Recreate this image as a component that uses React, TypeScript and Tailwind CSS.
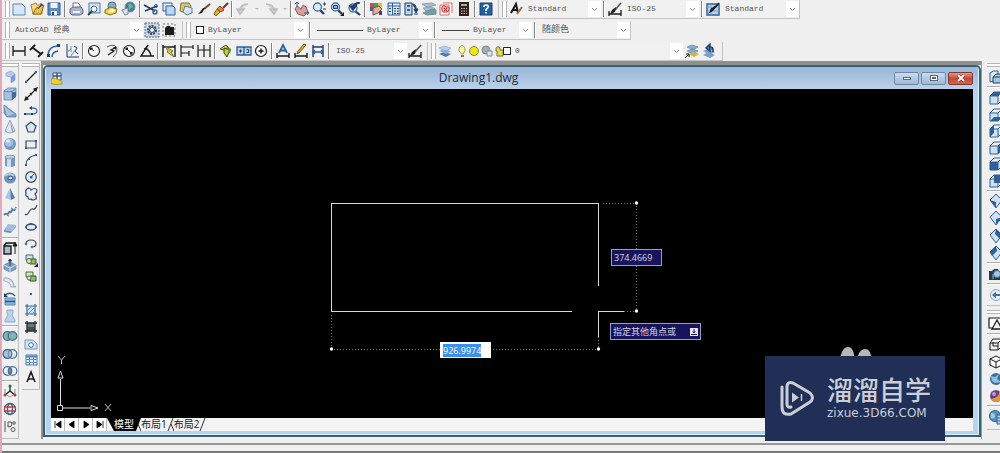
import { useEffect, useRef, type ReactNode } from "react";

const NAVY = "#1f3f66";
const BLUE = "#2f6198";
const MID = "#6f9ccb";
const PALE = "#cfe0f3";
const INK = "#1b1b1b";
const GOLD = "#e3b21c";

const dimEnds = <path d="M2 3v10M14 3v10M2 8h12" stroke={INK} strokeWidth="1.300" />;
const lens = (
  <>
    <path d="M9 9l4 4" stroke={NAVY} strokeWidth="2.4" />
    <circle cx="6.5" cy="6" r="4" fill="#d9ecfa" stroke="#486f96" strokeWidth="1.3" />
  </>
);
const cubeEdges = <path d="M2 6h8v8H2zM2 6l4-4h8l-4 4M14 2v8l-4 4" stroke={BLUE} fill="none" />;
const gem = <path d="M8 1l6 6-6 8-6-8z" fill={PALE} stroke={BLUE} />;
const rings = (
  <>
    <circle cx="5.5" cy="8" r="4.3" />
    <circle cx="10.5" cy="8" r="4.3" />
  </>
);

const icons: Record<string, ReactNode> = {
  new: <path d="M2 3h9l3 3v8H2z" fill="#d7e7f7" stroke="#5d87b0" />,
  open: (
    <>
      <path d="M2 4l5-2 1 2h5v9H4z" fill="#f4dc8b" stroke="#a88428" />
      <path d="M4 13l3-6 8-3-3 9z" fill="#e9c14a" stroke="#8d6d1e" />
      <path d="M9 8l4-5M11 3h2v2" stroke={NAVY} />
    </>
  ),
  save: (
    <>
      <path d="M2 2h12v12H2z" fill="#5c8dc2" stroke="#2f5a8a" />
      <path d="M4.5 2h7v5h-7zM5 10h6v4H5z" fill="#eef4fa" />
      <path d="M6 11h2v3H6z" fill={NAVY} />
    </>
  ),
  print: (
    <>
      <path d="M5 7V2h5l2 2v3" fill="#fff" stroke="#6b7893" />
      <path d="M2 8l3-2h8l2 3v3l-3 2H4l-2-2z" fill="#a9b5cb" stroke="#5b6888" />
      <path d="M5 11h7" stroke="#fff" strokeWidth="1.5" />
    </>
  ),
  preview: (
    <>
      <path d="M3 2h11v10H3z" fill="#d5e4f4" stroke="#56779f" />
      <circle cx="8" cy="8" r="3" fill="#edf6fd" stroke="#4a6c93" />
      <path d="M6 10l-4 4" stroke={NAVY} strokeWidth="2" />
    </>
  ),
  publish: (
    <>
      <circle cx="9" cy="5" r="4" fill="#86add5" stroke="#47709b" />
      <path d="M2 9l6-3 6 2-1 4-6 2-5-2z" fill="#f0d13e" stroke="#866e1d" />
      <path d="M5 10l4-2 3 1-3 3z" fill="#fff" />
    </>
  ),
  dwf: (
    <>
      <circle cx="9" cy="6" r="5" fill="#3d77ab" stroke="#6996c0" />
      <path d="M7 3q4-1 5 3l-4 3z" fill="#76b480" />
      <path d="M1 9l6-2v6l-3 1z" fill="#e1e5ec" stroke="#7b8798" />
    </>
  ),
  cut: (
    <>
      <path d="M1 4l11 6M2 10l12-5" stroke={NAVY} strokeWidth="1.5" />
      <circle cx="12" cy="11" r="2" stroke={BLUE} fill="none" strokeWidth="1.4" />
      <circle cx="13" cy="5" r="1.5" stroke={BLUE} fill="none" />
    </>
  ),
  copy: (
    <>
      <path d="M2 2h9v8H2z" fill="#e4effa" stroke={BLUE} />
      <path d="M5 5h7l2 2v7H5z" fill="#bed5ee" stroke={BLUE} />
    </>
  ),
  paste: (
    <>
      <path d="M3 2h8l2 3-3 8-8-3z" fill="#d9c472" stroke="#82733c" />
      <path d="M7 5l7 2v5l-5 2-4-3z" fill="#d9e8f6" stroke="#587da6" />
    </>
  ),
  brush: (
    <>
      <path d="M14 3L8 8" stroke="#8a4a2c" strokeWidth="2.2" />
      <path d="M9 7l-3 5-4 1 2-2 3-4z" fill={INK} />
    </>
  ),
  match: (
    <>
      <path d="M15 2l-5 5" stroke="#8a2c2c" strokeWidth="2.2" />
      <path d="M7 5l4 4-3 2-4-3z" fill="#e5883a" stroke="#7d491d" />
      <path d="M4 8l3 3-4 4-2-2z" fill={GOLD} stroke="#80641c" />
    </>
  ),
  undo: <path d="M13 3Q5 3 5 10M2 8l3 5 4-5z" fill="#bdbdbd" fillOpacity=".5" stroke="#bdbdbd" strokeWidth="1.6" />,
  redo: <path d="M3 3q8 0 8 7M7 8l4 5 3-5z" fill="#bdbdbd" fillOpacity=".5" stroke="#bdbdbd" strokeWidth="1.6" />,
  pan: (
    <>
      <path d="M3 5l4 3 2-4 3 2 2 5-4 4-6-2-3-5z" fill="#d5a19a" stroke="#8a5a62" />
      <path d="M3 1v5M1 3l2-2 2 2M10 12h5M13 10l2 2-2 2" stroke={BLUE} />
    </>
  ),
  zoomRt: <>{lens}<path d="M12 3h3M13.500 1.500v3M12 8h3" stroke={NAVY} /></>,
  zoomWin: <>{lens}<path d="M4.500 4.500h4v3h-4z" fill="#8fb5db" stroke={NAVY} /><path d="M15 11v4h-4z" fill={INK} /></>,
  zoomPrev: (
    <>
      <path d="M9 10l5 4" stroke={NAVY} strokeWidth="2.2" />
      <circle cx="7" cy="7" r="4" fill="#d9ecfa" stroke="#486f96" strokeWidth="1.3" />
      <path d="M14 2Q9 1 7 6M4 5l3 4 3-4z" stroke={NAVY} strokeWidth="1.5" fill={NAVY} />
    </>
  ),
  props: (
    <>
      <path d="M2 2h4v4H2z" fill="#cf4f49" />
      <path d="M6 2h4v4H6z" fill="#49a14b" />
      <path d="M10 2h4v4h-4z" fill="#d8c53c" />
      <path d="M2 6h4v4H2z" fill="#405fba" />
      <path d="M5 7l6-2 3 3-4 4-5 2z" fill="#e2b094" stroke="#744b61" />
      <path d="M11 10h3v4h-3z" fill="#493a83" />
    </>
  ),
  center: (
    <>
      <path d="M2 2h12v12H2z" fill="#dceaf6" stroke={BLUE} />
      <path d="M6.500 2v12M2 5h12" stroke={BLUE} />
      <path d="M8 7.500h2M11 7.500h2M8 10h2M11 10h2M8 12.500h2M11 12.500h2M3 7.500h2M3 10.500h2" stroke={NAVY} strokeWidth="1.2" />
    </>
  ),
  palettes: (
    <>
      <path d="M2 2h7v12H2z" fill="#bed2e8" stroke={NAVY} />
      <path d="M4 4h3v2H4zM4 8h3v2H4z" fill={BLUE} />
      <path d="M9 3q5 0 4 6M11 8l2 4 2-4zM11 13h4" stroke={NAVY} fill={NAVY} />
    </>
  ),
  sheets: (
    <>
      <path d="M1 3l10-1 4 2-9 2zM2 7l9-1 3 2-9 2z" fill="#a9bed1" stroke="#8aa2ba" />
      <path d="M2 12l9-4 4 1v4l-9 1z" fill="#7c9f9a" stroke="#6a8793" />
    </>
  ),
  markup: (
    <>
      <path d="M2 4h9v10H2zM5 2h9v10" fill="#fff" stroke="#d36a6a" />
      <path d="M4 6q2-3 4 0 4-1 3 3-1 3-4 2-4 1-3-5z" fill="#f2baba" stroke="#c83232" />
      <path d="M6 7l3 3M9 7l-3 3" stroke="#b02020" />
    </>
  ),
  calc: (
    <>
      <path d="M3 1h10v14H3z" fill="#30231f" />
      <path d="M5 3h6v2H5z" fill="#a0b49a" />
      <path d="M5 7.500h6M5 10h6M5 12.500h6" stroke="#c8b7aa" strokeDasharray="1.500 1" />
    </>
  ),
  help: (
    <>
      <path d="M2 2h12v12H2z" fill="#25619b" stroke="#153f70" />
      <path d="M6 6q0-2 2-2 3 0 2 2.500L8 8.500V10M8 11v1.500" stroke="#fff" strokeWidth="1.600" fill="none" />
    </>
  ),
  textStyle: (
    <>
      <path d="M3 12L8 3l2 9M5 9h5" stroke={INK} strokeWidth="2" fill="none" />
      <path d="M14 6l-5 7" stroke="#9a7148" strokeWidth="2" />
    </>
  ),
  dimStyle: (
    <>
      <path d="M14 2l-6 7" stroke="#555" strokeWidth="1.600" />
      <path d="M9 6l-1 5-5 2 2-4z" fill={INK} />
      <path d="M2 10v5M14 9v6M2 13h12" stroke={INK} strokeWidth="1.300" />
    </>
  ),
  tableStyle: (
    <>
      <path d="M2 3h12v11H2z" fill="#b9d2ed" stroke={BLUE} strokeWidth="1.500" />
      <path d="M2 6h12M6 6v8M2 10h12" stroke="#7fa5cd" />
      <path d="M14 2l-6 7-3 2 2-4" fill={INK} stroke={INK} strokeWidth="1.300" />
    </>
  ),
  gear: (
    <>
      <path d="M1 1h14v14H1z" fill="#c4d7ea" stroke="#5e6c7d" strokeDasharray="2 1" />
      <circle cx="8" cy="8" r="4" fill="none" stroke="#34475e" strokeWidth="2" strokeDasharray="2 1" />
      <circle cx="8" cy="8" r="2.500" fill="#e9f0f7" stroke="#34475e" />
    </>
  ),
  workspace: (
    <>
      <path d="M2 2h12v12H2z" fill="none" stroke="#777" strokeDasharray="2 2" />
      <path d="M4 6q3-4 6-1h3v8H4z" fill={INK} />
    </>
  ),
  dimLinear: dimEnds,
  dimAligned: <path d="M1 7l5-5M9 14l5-5M4 5l8 6" stroke={INK} strokeWidth="1.800" />,
  dimArc: (
    <>
      <path d="M2 13Q2 3 13 3M6 14q0-5 6-6" stroke={BLUE} fill="none" strokeWidth="1.400" />
      <path d="M11 1h3v3h-3zM1 11h3v3H1z" fill={NAVY} />
    </>
  ),
  dimOrd: (
    <>
      <path d="M3 1v13h12M10 3l3 2-2 3 3 3" stroke={NAVY} fill="none" />
      <path d="M2 10l5-4M7 13l4-6M7 3v6" stroke="#6d8fb2" />
    </>
  ),
  radius: (
    <>
      <circle cx="8" cy="8" r="5.500" fill="#f7f7f7" stroke={INK} strokeWidth="1.100" />
      <path d="M8 8L4.500 5M4.500 7V5h2z" stroke={INK} fill={INK} />
    </>
  ),
  jogged: (
    <>
      <path d="M3 4q7-4 10 1 1 5-4 9" fill="none" stroke="#555" />
      <path d="M11 5L7 7l3 1-6 4" stroke={INK} fill="none" strokeWidth="1.300" />
      <path d="M9 4h3v3z" fill={INK} />
    </>
  ),
  diameter: (
    <>
      <circle cx="8" cy="8" r="5.500" fill="#f7f7f7" stroke={INK} strokeWidth="1.100" />
      <path d="M5 5l6 6M5 7V5h2zM11 9v2H9z" stroke={INK} fill={INK} />
    </>
  ),
  angular: <path d="M9 2L2 13h13M6 5q5 2 6 8M5 6l3-1" stroke={INK} fill="none" strokeWidth="1.400" />,
  quickDim: (
    <>
      <path d="M2 2v12M14 2v12M2 4h12" stroke={INK} strokeWidth="1.400" />
      <path d="M4 3l8 5-2 1 3 5-7-5 1-1z" fill="#d9c638" stroke="#5c632a" strokeWidth=".8" />
    </>
  ),
  baseline: <path d="M2 2v12M2 4h12M2 10h8M14 2v4M10 8v5" stroke={INK} strokeWidth="1.200" fill="none" />,
  continueDim: <path d="M2 2v12M8 2v12M14 2v12M2 7h12" stroke={INK} strokeWidth="1.200" />,
  inspection: (
    <>
      <path d="M2 6l6-4 3 3-5 2z" fill="#e2d338" stroke="#4c5c2a" />
      <path d="M6 5l6 2-3 7-3-4z" fill="#c9c93a" stroke="#33461b" />
      <path d="M8 3l5 3-1 5z" fill="#4f8a35" />
    </>
  ),
  tolerance: (
    <>
      <path d="M1 4h14v8H1z" fill="#b6cee8" stroke={BLUE} strokeWidth="1.300" />
      <path d="M8 4v8M3 8h3M4.500 6.500v3M10.500 6.500h2v3h-2" stroke={NAVY} fill="none" />
    </>
  ),
  centerMark: (
    <>
      <circle cx="8" cy="8" r="5.500" fill="#fafafa" stroke={INK} strokeWidth="1.200" />
      <path d="M8 5.500v5M5.500 8h5" stroke={INK} strokeWidth="1.500" />
    </>
  ),
  dimText: (
    <>
      <path d="M4 10l4-8 4 8M5.500 7.500h5" stroke={BLUE} strokeWidth="1.800" fill="none" />
      <path d="M2 10v5M14 10v5M2 13h12" stroke={INK} strokeWidth="1.400" />
    </>
  ),
  dimEdit: (
    <>
      <path d="M13 2L6 10l-2 1 1-3 6-7z" fill={GOLD} stroke="#7c4b1d" />
      <path d="M2 10v5M14 10v5M2 13h12" stroke={INK} strokeWidth="1.400" />
    </>
  ),
  dimUpdate: (
    <>
      <path d="M3 2v12M13 2v12M3 4h10" stroke={NAVY} strokeWidth="1.400" />
      <path d="M3 9h10M5 7L3 9l2 2M11 7l2 2-2 2" stroke={BLUE} fill="none" strokeWidth="1.300" />
    </>
  ),
  layers: (
    <>
      <path d="M2 11l5-2 7 2-5 3z" fill="#4d7aa9" />
      <path d="M2 8l5-2 7 2-5 3z" fill="#8cb2d8" />
      <path d="M2 5l5-2 7 2-5 3z" fill="#b8d1e9" stroke="#7ea1c3" strokeWidth=".6" />
    </>
  ),
  layerCurrent: (
    <>
      <path d="M3 4l5-2 6 2-5 3zM3 8l5-2 6 2-5 3z" fill="#86acd0" stroke="#567ba1" strokeWidth=".6" />
      <path d="M5 11l5-2 5 2-5 3z" fill="#c8b83e" />
      <path d="M1 15l4-4M2 11h3v3" stroke={INK} fill="none" />
    </>
  ),
  layerPrev: (
    <>
      <path d="M2 12l5-3 7 3-5 3zM2 8l5-2 7 3-5 3z" fill="#7ba0c8" />
      <path d="M12 9Q13 3 8 4M9 1L5 5l4 3z" stroke={NAVY} fill="#4f7eae" strokeWidth="1.400" />
    </>
  ),
  polysolid: (
    <>
      <path d="M4 4l5-2 4 3v6l-4 3V8L4 7z" fill="#b4c9ee" stroke="#93a8d8" strokeWidth=".8" />
      <path d="M9 8l4-3v6l-4 3z" fill="#7f97d2" />
    </>
  ),
  box: (
    <>
      <path d="M2 5l4-3h8v8l-4 4H2z" fill="#a7c2e0" stroke="#6485a9" strokeWidth=".8" />
      <path d="M10 6h4v5l-4 3z" fill="#426a96" />
      <path d="M2 5.500h8V14M10 5.500l4-3" stroke="#5f81a7" strokeWidth=".8" fill="none" />
    </>
  ),
  wedge: (
    <>
      <path d="M2 2l12 9v3H5L2 10z" fill="#7ba0c8" stroke="#6084ab" strokeWidth=".8" />
      <path d="M2 3l10 8-7 2z" fill="#a9c4df" />
    </>
  ),
  cone: (
    <>
      <path d="M8 1L3 12q5 4 10 0z" fill="#dde6f0" stroke="#8394a8" strokeWidth=".8" />
      <path d="M8 2l2 11h2z" fill="#8fa8c3" />
    </>
  ),
  sphere: (
    <>
      <circle cx="8" cy="8" r="6" fill="#7499c1" />
      <circle cx="7" cy="6.500" r="4" fill="#a7c3df" />
      <circle cx="6" cy="5" r="1.800" fill="#e0ecf6" />
    </>
  ),
  cylinder: (
    <>
      <path d="M3 4v9q5 2 10 0V4z" fill="#7397bd" />
      <path d="M5 5h4v9H5z" fill="#cfdfee" />
      <ellipse cx="8" cy="4" rx="5" ry="1.800" fill="#b6cce3" stroke="#7594b5" strokeWidth=".8" />
    </>
  ),
  torus: (
    <>
      <ellipse cx="8" cy="8" rx="6" ry="5.500" fill="#6e94be" />
      <path d="M3 6q4-4 9 0" stroke="#b5cde4" strokeWidth="2" fill="none" />
      <ellipse cx="8.500" cy="8" rx="2.500" ry="1.700" fill="#d8e4f0" stroke="#2c527d" />
    </>
  ),
  pyramid: (
    <>
      <path d="M8 2L3 12l6 2z" fill="#a8c5e4" />
      <path d="M8 2l5 10-4 2z" fill="#4d7bae" />
    </>
  ),
  helix: (
    <path d="M2 12l2-2 2 2 1-4 2 2 1-4 2 2 2-4" stroke="#5179a5" strokeWidth="1.800" strokeDasharray="2.500 .8" fill="none" />
  ),
  planar: (
    <>
      <path d="M6 4l8 1-4 6-8-1z" fill="#a2bddb" />
      <path d="M2 10l8 1-1 2-7-1z" fill="#6c91ba" />
      <path d="M10 11l4-6v2l-5 6z" fill="#7fa1c6" />
    </>
  ),
  extrude: (
    <>
      <path d="M2 6h7v8H2zM2 6l2-3h8" fill="#a9bccf" stroke={INK} strokeWidth="1.400" />
      <path d="M13 14V4M11 6l2-4 2 4z" stroke={INK} fill={INK} />
    </>
  ),
  presspull: (
    <>
      <path d="M2 8l6-3 6 3v4l-6 3-6-3z" fill="#7e9fc2" stroke="#5f80a5" strokeWidth=".8" />
      <path d="M8 9V3M6.500 4L8 2l1.500 2z" stroke={NAVY} fill={NAVY} />
      <path d="M2 8l6 3 6-3M8 11v4" stroke="#d4e2f0" fill="none" />
    </>
  ),
  sweep: <path d="M2 4q9-1 10 9l2-1M2 7q6 0 7 6h5M2 4v3" stroke="#9fb3cc" strokeWidth="1.200" fill="#dce5ef" />,
  revolve: (
    <>
      <path d="M3 7h10v7H3z" fill="#8db3da" stroke="#5e89b6" />
      <path d="M3 4q6-4 10 1M3 10.500h10" stroke="#285a8e" fill="none" strokeWidth="1.400" />
      <path d="M2 2v4h4z" fill={NAVY} />
    </>
  ),
  loft: <path d="M5 2h6v3l-1 2 3 5v2H3v-2l3-5-1-2z" fill="#bdd1ec" stroke="#8eabcf" />,
  union: <g fill="#86b2b0" stroke="#3f6d99" strokeWidth="1.300">{rings}</g>,
  subtract: (
    <g fill="#e4ecf4" stroke="#476f9a" strokeWidth="1.200">
      {rings}
      <circle cx="5.500" cy="8" r="4.300" fill="#86abc5" fillOpacity=".6" />
    </g>
  ),
  intersect: (
    <g fill="none" stroke="#476f9a" strokeWidth="1.200">
      {rings}
      <path d="M8 5q3 3 0 6-3-3 0-6z" fill="#6d9dbd" />
    </g>
  ),
  move3d: (
    <>
      <path d="M8 3v5M8 8l-5 4M8 8l5 4" stroke={INK} strokeWidth="1.200" />
      <path d="M3 6v5l5 3 5-3V6" stroke="#7aa393" fill="none" />
      <circle cx="8" cy="3" r="1.500" fill="#2d6a4a" />
      <circle cx="3" cy="12" r="1.500" fill="#b93838" />
      <circle cx="13" cy="12" r="1.500" fill="#b93838" />
    </>
  ),
  rotate3d: (
    <g fill="none" strokeWidth="1.300">
      <circle cx="8" cy="8" r="5.500" stroke="#3a6b54" />
      <ellipse cx="8" cy="8" rx="2.500" ry="5.500" stroke="#385fa2" />
      <path d="M2 6h12M2 10h12" stroke="#c63b47" />
    </g>
  ),
  align3d: (
    <g fill="none" stroke="#555">
      <path d="M3 3v11M6 4q4-1 4 2t-4 3V4" />
      <circle cx="12" cy="5" r="1.300" />
      <circle cx="11" cy="11.500" r="2" />
    </g>
  ),
  line: (
    <>
      <path d="M3 13L13 3" stroke={INK} strokeWidth="1.200" />
      <path d="M2 12h2v2H2zM12 2h2v2h-2z" fill={BLUE} />
    </>
  ),
  xline: <path d="M3 13L13 3M11 3l3-1-1 3zM2 14l1-3 2 2zM7 7l2 2" stroke={INK} fill={INK} strokeWidth="1.200" />,
  polyline: (
    <>
      <path d="M2 12h7q5 0 5-3t-5-3" stroke="#4174a8" strokeWidth="1.300" fill="none" />
      <path d="M1 11h2v2H1zM8 11h2v2H8zM9 4v4L6 6z" fill={NAVY} />
    </>
  ),
  polygon: <path d="M8 3l5 4-2 6H5L3 7z" fill="#d9e5f0" stroke="#39495d" strokeWidth="1.200" />,
  rectangle: (
    <>
      <path d="M3 5h10v7H3z" fill="#e8eff7" stroke="#39495d" strokeWidth="1.200" />
      <path d="M2 11h2v2H2zM12 4h2v2h-2z" fill={BLUE} />
    </>
  ),
  arc: (
    <>
      <path d="M3 13Q3 5 13 3" stroke="#39495d" fill="none" strokeWidth="1.200" />
      <path d="M2 12h2v2H2zM5 6h2v2H5zM12 2h2v2h-2z" fill={BLUE} />
    </>
  ),
  circle: (
    <>
      <circle cx="8" cy="8" r="5.300" fill="#e0eaf3" stroke="#39495d" strokeWidth="1.200" />
      <path d="M8 8l3.500-3.500" stroke={BLUE} />
      <path d="M7 7h2.500v2.500H7z" fill={BLUE} />
    </>
  ),
  revcloud: (
    <path d="M4 3q3-2 4 1 4-3 6 0 0 3-2 4 2 3 1 5-3 2-5 0-3 1-3-2-3-1-2-4-1-3 1-4z" fill="#e7edf4" stroke="#39495d" strokeWidth="1.200" />
  ),
  spline: <path d="M2 12q2 2 4-2t4-3 4-4" stroke="#39495d" fill="none" strokeWidth="1.200" />,
  ellipse: (
    <>
      <ellipse cx="8" cy="8" rx="5" ry="3" fill="#dce8f3" stroke="#39495d" strokeWidth="1.300" />
      <path d="M2 7h2v2H2zM12 7h2v2h-2zM7 4h2v2H7z" fill={BLUE} />
    </>
  ),
  ellipseArc: (
    <>
      <path d="M3 8q0-4 5-4t5 4q0 3-4 3" fill="none" stroke="#39495d" strokeWidth="1.200" />
      <path d="M2 7h2v2H2zM8 10h2v2H8z" fill={BLUE} stroke={MID} strokeWidth=".5" />
    </>
  ),
  insert: (
    <>
      <path d="M3 3h7v5H3z" fill="#cfe0ef" stroke="#45698e" />
      <path d="M7 7h6v5H7z" fill="#8cbc5c" stroke="#3f5c35" />
      <circle cx="6" cy="9" r="2.500" fill="#d7e6a8" stroke="#4e6b3c" />
      <path d="M15 11v4h-4z" fill={INK} />
    </>
  ),
  block: (
    <>
      <path d="M3 3h7v5H3z" fill="#d4e4b6" stroke="#4f6949" />
      <path d="M7 7h6v5H7z" fill="#8fbf65" stroke="#38533a" />
      <circle cx="6" cy="9" r="2" fill="#e6eec9" stroke="#4f6949" />
    </>
  ),
  point: <path d="M7 7h2v2H7z" fill={BLUE} />,
  hatch: (
    <>
      <path d="M4 4h8v8H4z" fill="#cde1f4" />
      <path d="M4 2v12M12 2v12M2 4h12M2 12h12" stroke="#3f6a97" strokeWidth="1.200" />
      <path d="M4 9l5-5M5 12l7-7M9 12l3-3" stroke="#719bc5" />
    </>
  ),
  gradient: (
    <>
      <path d="M4 4h8v8H4z" fill="#6c7775" />
      <path d="M4 8h8v4H4z" fill="#46504f" />
      <path d="M4 2v12M12 2v12M2 4h12M2 12h12" stroke="#263033" strokeWidth="1.300" />
    </>
  ),
  region: (
    <>
      <path d="M2 4h8l4 4v5H2z" fill="#d2e2f2" stroke="#7494b6" />
      <circle cx="8" cy="9" r="2.300" fill="#fff" stroke="#426d98" />
    </>
  ),
  table: (
    <>
      <path d="M3 3h11v10H3z" fill="#e2edf8" stroke="#4778ae" />
      <path d="M3 4.500h11" stroke="#5486bf" strokeWidth="2" />
      <path d="M6.500 4v9M10.500 4v9M3 7.500h11M3 10.500h11" stroke="#5d8fc4" />
    </>
  ),
  mtext: <path d="M4 13L8 3l4 10M5.500 10h5" stroke={INK} strokeWidth="1.600" fill="none" />,
  namedViews: (
    <>
      <path d="M2 4q3-3 8-2v8l-8 3z" fill="#dce9f5" stroke={BLUE} />
      <path d="M5 8h8v6H5zM5 8l3-3h7v6l-2 3" fill="#a5c5e2" stroke={NAVY} />
    </>
  ),
  viewTop: <><path d="M2 6h8v8H2z" fill={PALE} /><path d="M2 6l4-4h8l-4 4z" fill={BLUE} />{cubeEdges}</>,
  viewBottom: <><path d="M2 6h8v5H2z" fill={PALE} /><path d="M2 14l4-4h8l-4 4z" fill={BLUE} />{cubeEdges}</>,
  viewLeft: <><path d="M6 6h5v7H6z" fill={PALE} /><path d="M2 6l4-4v8l-4 4z" fill={BLUE} />{cubeEdges}</>,
  viewRight: <><path d="M2 6h8v8H2z" fill={PALE} /><path d="M10 6l4-4v8l-4 4z" fill={BLUE} />{cubeEdges}</>,
  viewFront: <><path d="M10 6l4-4v8l-4 4z" fill={PALE} /><path d="M2 6h8v8H2z" fill={BLUE} />{cubeEdges}</>,
  viewBack: <><path d="M2 6h8v8H2z" fill={PALE} /><path d="M6 2h8v8H6z" fill={BLUE} />{cubeEdges}</>,
  isoSw: <>{gem}<path d="M2 7l6 2v6z" fill={BLUE} /></>,
  isoSe: <>{gem}<path d="M14 7L8 9v6z" fill={BLUE} /></>,
  isoNe: <>{gem}<path d="M8 1l6 6-2 4-5-5z" fill={BLUE} /></>,
  isoNw: <>{gem}<path d="M8 1L2 7l2 4 5-5z" fill={BLUE} /></>,
  camera: (
    <>
      <path d="M1 5h3l2-2h4l1 2h4v9H1z" fill="#27394a" />
      <circle cx="9" cy="8" r="3.500" fill="#a4c9e4" stroke="#476f91" />
      <path d="M5 8v5" stroke="#9bb7ca" />
    </>
  ),
  back: (
    <>
      <circle cx="8" cy="8" r="5.500" fill="#e8eff7" stroke="#8ba5c4" />
      <path d="M4 8l4-3.500v2.500h4v2H8v2.500z" fill="#41719f" />
    </>
  ),
  wire2d: (
    <>
      <path d="M1 2h14v10H1z" fill="#fff" stroke={INK} strokeWidth="1.200" />
      <path d="M4 13l5-9 5 9z" fill="#eee" stroke={INK} strokeWidth="1.300" />
    </>
  ),
  wire3d: <path d="M2 6h8v7H2zM2 6l3-4h9l-4 4M14 2v7l-4 4M5 9V5M5 9h5" stroke={INK} fill="none" />,
  hidden3d: <path d="M8 2l6 3v6l-6 3-6-3V5zM2 5l6 3 6-3M8 8v6" stroke={INK} fill="#f8f8f8" />,
  realistic: (
    <>
      <circle cx="8" cy="8" r="6" fill="#3b6f9d" />
      <path d="M3 5l4 1 4-3-2 5 4 3-6 1-3-2z" fill="#8dc0dc" />
      <path d="M11 12l4 1v3z" fill={GOLD} />
    </>
  ),
  conceptual: (
    <>
      <circle cx="8" cy="8" r="6" fill="#63418c" />
      <path d="M8 14q6-1 6-6 0-4-3-5 1 6-8 8 2 3 5 3z" fill="#e3952f" />
      <circle cx="6" cy="6" r="2" fill="#b79ad2" />
    </>
  ),
  manageStyles: (
    <>
      <circle cx="7" cy="7" r="5.500" fill="#5a92b8" stroke="#315e85" />
      <path d="M3 4q4 0 4 3t-4 2z" fill="#a5cce0" />
      <path d="M9 6h6v9H9zM9 9h6M9 12h6" fill="#b5d1ed" stroke={BLUE} />
    </>
  ),
};

function Icon({ name }: { name: string }) {
  return (
    <svg viewBox="0 0 16 16" className="block h-4 w-4 shrink-0" fill="none" aria-hidden="true">
      {icons[name]}
    </svg>
  );
}

function Tool({ name }: { name: string }) {
  return (
    <button type="button" aria-label={name} className="block h-4 w-4 shrink-0">
      <Icon name={name} />
    </button>
  );
}

const tools = (names: string) => names.split(" ").map((n) => <Tool key={n} name={n} />);

const Sep = () => <span className="mx-[2px] h-4 w-[2px] shrink-0 border-l border-[#858585] bg-white" />;
const HSep = () => <span className="my-px h-[2px] w-full shrink-0 border-t border-[#adadad] bg-white" />;
const Grip = () => <span className="mr-px h-4 w-[5px] shrink-0 border-x border-[#b5b5b5] bg-white" />;
const HGrip = () => <span className="mb-[2px] h-1 w-full shrink-0 border-y border-[#b5b5b5] bg-white" />;

function Combo({
  label,
  value,
  className,
  children,
}: {
  label: string;
  value: string;
  className: string;
  children?: ReactNode;
}) {
  return (
    <span className={`flex h-4 shrink-0 items-center gap-1 bg-[#f1f1f1] pl-1 ${className}`}>
      {children}
      <select
        aria-label={label}
        className="h-4 min-w-0 flex-1 appearance-none bg-transparent text-[8px] leading-4 text-[#555] outline-none"
      >
        <option>{value}</option>
      </select>
      <span className="flex h-4 w-[13px] items-center justify-center bg-white">
        <svg viewBox="0 0 7 5" className="h-[5px] w-[7px]" fill="none" aria-hidden="true">
          <path d="M1 1l2.500 2.500L6 1" stroke="#888" />
        </svg>
      </span>
    </span>
  );
}

const Drop = () => (
  <svg viewBox="0 0 6 4" className="h-1 w-[6px] shrink-0" aria-hidden="true">
    <path d="M1 1h4L3 3z" fill="#b5b5b5" />
  </svg>
);

const bar = "flex h-[19px] items-center border-r border-b border-[#c4c4c4] pl-[3px]";

function TopBars() {
  return (
    <header className="flex flex-col items-start gap-[2px] overflow-hidden">
      <div className="flex">
        <div className={bar}>
          <Grip />
          <div className="flex w-[51px] justify-between">{tools("new open save")}</div>
          <Sep />
          <div className="flex w-[69px] justify-between">{tools("print preview publish dwf")}</div>
          <Sep />
          <div className="flex w-[86px] justify-between">{tools("cut copy paste brush match")}</div>
          <Sep />
          <div className="flex w-[53px] items-center justify-between">
            <Tool name="undo" />
            <Drop />
            <Tool name="redo" />
            <Drop />
          </div>
          <Sep />
          <div className="flex w-[68px] justify-between">{tools("pan zoomRt zoomWin zoomPrev")}</div>
          <Sep />
          <div className="flex w-[104px] justify-between">
            {tools("props center palettes sheets markup calc")}
          </div>
          <Sep />
          <Tool name="help" />
          <span className="w-1" />
        </div>
        <div className={bar}>
          <Grip />
          <Tool name="textStyle" />
          <Combo label="Text style" value="Standard" className="w-[77px]" />
          <Sep />
          <Tool name="dimStyle" />
          <Combo label="Dimension style" value="ISO-25" className="w-[76px]" />
          <Sep />
          <Tool name="tableStyle" />
          <Combo label="Table style" value="Standard" className="w-[78px]" />
        </div>
      </div>

      <div className="flex">
        <div className={bar}>
          <Grip />
          <Combo label="Workspace" value="AutoCAD 经典" className="w-[132px]" />
          <div className="flex gap-px px-px">{tools("gear workspace")}</div>
          <span className="w-1" />
        </div>
        <div className={bar}>
          <Grip />
          <Combo label="Color" value="ByLayer" className="w-[115px]">
            <span className="h-2 w-2 border border-[#222] bg-white" />
          </Combo>
          <Sep />
          <Combo label="Linetype" value="ByLayer" className="w-[119px]">
            <span className="h-px w-[46px] bg-[#444]" />
          </Combo>
          <Sep />
          <Combo label="Lineweight" value="ByLayer" className="w-[94px]">
            <span className="h-px w-[27px] bg-[#444]" />
          </Combo>
          <Sep />
          <Combo label="Plot style" value="随颜色" className="w-[92px] [&_select]:text-[9px]" />
        </div>
      </div>

      <div className="flex">
        <div className={bar}>
          <Grip />
          <div className="flex w-[69px] justify-between">{tools("dimLinear dimAligned dimArc dimOrd")}</div>
          <Sep />
          <div className="flex w-[69px] justify-between">{tools("radius jogged diameter angular")}</div>
          <Sep />
          <div className="flex w-[51px] justify-between">{tools("quickDim baseline continueDim")}</div>
          <Sep />
          <div className="flex w-[51px] justify-between">{tools("inspection tolerance centerMark")}</div>
          <Sep />
          <div className="flex w-[51px] justify-between">{tools("dimText dimEdit dimUpdate")}</div>
          <Sep />
          <Combo label="Dimension style" value="ISO-25" className="w-[75px]" />
          <Tool name="dimStyle" />
          <span className="w-1" />
        </div>
        <div className={bar}>
          <Grip />
          <Tool name="layers" />
          <Combo label="Layer" value="0" className="w-[230px]">
            <svg viewBox="0 0 54 14" className="h-[14px] w-[54px]" fill="none" aria-hidden="true">
              <path d="M4.500 10Q1 7 2 4q3-5 6 0 1 3-2 6z" fill="#fbf4a8" stroke="#a59b4d" />
              <path d="M4 12h3" stroke="#555" strokeWidth="1.500" />
              <circle cx="17" cy="7" r="4.500" fill="#e6e51e" stroke="#8b8c22" />
              <circle cx="29" cy="6" r="4" fill="#a0adb2" stroke="#7d8b91" />
              <path d="M30 7h5v5h-5z" fill="#dbe4e8" stroke="#859196" />
              <path d="M39 7V4q2-3 4 0v2h3v6h-6V7z" fill="#e1de53" stroke="#77752a" />
              <path d="M46.500 3.500h7v7h-7z" fill="#fff" stroke="#222" />
            </svg>
          </Combo>
          <div className="flex gap-px px-px">{tools("layerCurrent layerPrev")}</div>
          <span className="w-1" />
        </div>
      </div>
    </header>
  );
}

function LeftBars() {
  return (
    <aside className="flex shrink-0 items-start gap-[3px] overflow-hidden pr-px pt-[2px]">
      <div className="flex w-[17px] flex-col items-center border-r border-b border-[#bdbdbd] pb-1">
        <HGrip />
        <div className="flex h-[167px] flex-col justify-between">
          {tools("polysolid box wedge cone sphere cylinder torus pyramid helix planar")}
        </div>
        <HSep />
        <div className="flex h-[84px] flex-col justify-between">
          {tools("extrude presspull sweep revolve loft")}
        </div>
        <HSep />
        <div className="flex h-[51px] flex-col justify-between">{tools("union subtract intersect")}</div>
        <HSep />
        <div className="flex h-[51px] flex-col justify-between">{tools("move3d rotate3d align3d")}</div>
      </div>
      <div className="flex w-[18px] flex-col items-center border-r border-b border-[#bdbdbd] pb-1">
        <HGrip />
        <div className="flex h-[316px] flex-col justify-between">
          {tools(
            "line xline polyline polygon rectangle arc circle revcloud spline ellipse ellipseArc insert block point hatch gradient region table mtext",
          )}
        </div>
      </div>
    </aside>
  );
}

function RightBars() {
  return (
    <aside className="flex w-[14px] shrink-0 flex-col items-start gap-1 overflow-hidden pl-px pt-[2px]">
      <div className="flex w-[17px] flex-col items-center border-b border-[#bdbdbd] pb-[2px]">
        <HGrip />
        {tools("namedViews")}
        <HSep />
        <div className="mt-px flex h-[99px] flex-col justify-between">
          {tools("viewTop viewBottom viewLeft viewRight viewFront viewBack")}
        </div>
        <HSep />
        <div className="flex h-[68px] flex-col justify-between">{tools("isoSw isoSe isoNe isoNw")}</div>
        <HSep />
        <div className="mt-px">{tools("camera")}</div>
        <HSep />
        <div className="mt-px">{tools("back")}</div>
      </div>
      <div className="flex w-[17px] flex-col items-center border-b border-[#bdbdbd] pb-1">
        <HGrip />
        {tools("wire2d")}
        <HSep />
        <div className="mt-px flex h-[67px] flex-col justify-between">
          {tools("wire3d hidden3d realistic conceptual")}
        </div>
        <HSep />
        <div className="mt-px">{tools("manageStyles")}</div>
      </div>
    </aside>
  );
}

function Canvas() {
  const width = useRef<HTMLInputElement>(null);
  useEffect(() => {
    width.current?.focus();
    width.current?.select();
  }, []);

  return (
    <div className="relative h-[329px] overflow-hidden bg-black font-['Open_Sans','Noto_Sans_CJK_SC',sans-serif] text-[9px]">
      <svg viewBox="0 0 922 329" className="block h-[329px] w-[922px]" fill="none" aria-hidden="true">
        <g stroke="#d8d8d8" shapeRendering="crispEdges">
          <path d="M280.500 114v108M280 114.500h267M547.500 114v83M280 222.500h241M547.500 222v26M547 222.500h26" />
        </g>
        <g stroke="#777" strokeDasharray="1 2" shapeRendering="crispEdges">
          <path d="M552 114.500h34M585.500 114v108M573 222.500h12M280.500 226v34M280 260.500h267M547.500 248v12" />
        </g>
        <g fill="#fff">
          <circle cx="585.500" cy="114" r="1.700" />
          <circle cx="585.500" cy="222" r="1.700" />
          <circle cx="280.500" cy="260" r="1.700" />
          <circle cx="547.500" cy="260" r="1.700" />
        </g>
        <g stroke="#ddd">
          <path d="M6.500 316.500h5v5h-5zM9.500 316V290M12 319h27M9.500 282l2.500 7H7zM47 319l-7-2.500v5z" />
          <path d="M7 267l3.500 4 3.500-4M10.500 271v4M54 315l6 7M60 315l-6 7" stroke="#bbb" />
        </g>
        <path d="M790 269v-3q2-8 7-8t6 8v3zM807 269v-2q2-7 7-7t6 7v2z" fill="#b7b7b7" />
      </svg>
      <div className="absolute left-[560px] top-[160px] flex h-[17px] w-[51px] items-center border border-[#9c9cc4] bg-[#17145c] px-[2px] text-[#d5d5e4]">
        374.4669
      </div>
      <input
        ref={width}
        aria-label="Width"
        defaultValue="926.9974"
        className="absolute left-[389px] top-[253px] h-4 w-[51px] bg-white px-[3px] leading-3 text-[#222] outline-none selection:bg-[#3c90ea] selection:text-white"
      />
      <div className="absolute left-[559px] top-[234px] flex h-[17px] w-[91px] items-center justify-between border border-[#9c9cc4] bg-[#17145c] px-[2px] text-[#d5d5e4]">
        <span className="whitespace-nowrap">指定其他角点或</span>
        <svg viewBox="0 0 8 8" className="h-2 w-2" aria-hidden="true">
          <path d="M0 0h8v8H0z" fill="#e2e8f8" />
          <path d="M4 1v4M2.500 3.500L4 5l1.500-1.500M1 6.500h6" stroke="#17145c" fill="none" />
        </svg>
      </div>
    </div>
  );
}

const caption = "flex h-[13px] w-[25px] items-center justify-center rounded-[2px] border";

function TabEdge({ d }: { d: string }) {
  return (
    <svg viewBox="0 0 7 13" className="h-[13px] w-[7px] shrink-0" fill="none" aria-hidden="true">
      <path d={d} stroke="#333" />
    </svg>
  );
}

function SheetTabs() {
  const arrows = ["M4 3v7M10 3v7L5 6.500z", "M9 3v7L4 6.500z", "M5 3v7l5-3.500z", "M10 3v7M4 3v7l5-3.500z"];
  const names = ["First", "Previous", "Next", "Last"];
  return (
    <div className="flex h-[13px] items-center bg-[#f3f3f3] font-['Open_Sans','Noto_Sans_CJK_SC',sans-serif] text-[10px] leading-[13px] text-[#222]">
      {arrows.map((d, i) => (
        <button
          key={d}
          type="button"
          aria-label={names[i]}
          className="h-[13px] w-[14px] border-r border-[#bbb] bg-white"
        >
          <svg viewBox="0 0 14 13" className="block h-[13px] w-[14px]" aria-hidden="true">
            <path d={d} fill="#000" stroke="#000" strokeWidth=".8" />
          </svg>
        </button>
      ))}
      <svg viewBox="0 0 7 13" className="h-[13px] w-[7px] shrink-0" aria-hidden="true">
        <path d="M0 0h7v13z" fill="#000" />
      </svg>
      <button type="button" className="h-[13px] bg-black text-white">
        模型
      </button>
      <svg viewBox="0 0 7 13" className="h-[13px] w-[7px] shrink-0" aria-hidden="true">
        <path d="M0 0h7L2 13H0z" fill="#000" />
        <path d="M4 6l3 7" stroke="#333" />
      </svg>
      <button type="button" className="h-[13px]">
        布局1
      </button>
      <TabEdge d="M6 0L1 13M4 6l3 7" />
      <button type="button" className="h-[13px]">
        布局2
      </button>
      <TabEdge d="M6 0L1 13" />
    </div>
  );
}

function DrawingWindow() {
  return (
    <main className="min-w-0 flex-1 border-l-2 border-t-4 border-[#8f9090]">
      <section className="rounded-t-[5px] border-2 border-[#3d5f74] bg-[#b9d3ec] px-[6px] pb-1 shadow-[inset_0_0_0_1px_#d5effb]">
        <div className="-mx-[5px] flex h-[22px] items-center gap-[2px] rounded-t-[3px] bg-linear-to-b from-[#9ab6d7] to-[#b9d1eb] px-[5px]">
          <svg viewBox="0 0 12 13" className="h-[13px] w-3" fill="none" aria-hidden="true">
            <path d="M2 1h8v7H2z" fill="#edf3fa" stroke="#34558c" />
            <path d="M6 1v6M2 4h8" stroke="#34558c" strokeWidth="1.500" />
            <path d="M0 7l4-1 4 2 3 1v3l-6 .5-5-1z" fill="#f2cf27" stroke="#9e821b" strokeWidth=".7" />
          </svg>
          <h1 className="flex-1 text-center font-['Open_Sans',sans-serif] text-[12px] leading-5 text-[#1f2b3b]">
            Drawing1.dwg
          </h1>
          <button
            type="button"
            aria-label="Minimize"
            className={`${caption} border-[#7188a5] bg-linear-to-b from-[#c9dcf0] to-[#9fb9d7]`}
          >
            <span className="h-[3px] w-2 border border-[#58697e] bg-white" />
          </button>
          <button
            type="button"
            aria-label="Maximize"
            className={`${caption} border-[#7188a5] bg-linear-to-b from-[#c9dcf0] to-[#9fb9d7]`}
          >
            <span className="h-[6px] w-2 border border-[#58697e] bg-white p-px">
              <span className="block h-[2px] border border-[#58697e]" />
            </span>
          </button>
          <button
            type="button"
            aria-label="Close"
            className={`${caption} border-[#7c3b36] bg-linear-to-b from-[#e0968a] via-[#c8452f] to-[#d3654b]`}
          >
            <svg viewBox="0 0 10 8" className="h-2 w-[10px]" aria-hidden="true">
              <path d="M2 1l6 6M8 1L2 7" stroke="#6b3a3a" strokeWidth="3" />
              <path d="M2 1l6 6M8 1L2 7" stroke="#fff" strokeWidth="1.800" />
            </svg>
          </button>
        </div>
        <Canvas />
        <SheetTabs />
      </section>
    </main>
  );
}

function Watermark() {
  return (
    <div className="absolute bottom-3 right-[55px] flex h-[85px] w-[180px] items-center gap-3 bg-[#212f56] pl-[14px] text-[#cbced6]">
      <svg viewBox="0 0 36 38" className="h-[38px] w-9 shrink-0" fill="none" aria-hidden="true">
        <path
          d="M3 7v20q0 9 9 7L31 22q5-4 0-9L14 3Q8 1 8 7v17q0 4 4 3"
          stroke="#cbced6"
          strokeWidth="3"
          strokeLinecap="round"
          strokeLinejoin="round"
        />
        <path d="M13 12.500l7 5-7 5z" fill="#cbced6" />
        <path d="M22.500 14v7" stroke="#cbced6" strokeWidth="1.500" />
      </svg>
      <div className="flex flex-col whitespace-nowrap">
        <span className="font-['Liberation_Sans','Noto_Sans_CJK_SC',sans-serif] text-[26px] font-medium leading-7">
          溜溜自学
        </span>
        <span className="font-['DejaVu_Sans',sans-serif] text-[12px] leading-4">zixue.3D66.COM</span>
      </div>
    </div>
  );
}

export default function App() {
  return (
    <div className="relative overflow-hidden border-l-2 border-[#dfa9b9] bg-[#f0f0f0] font-['Liberation_Mono','Noto_Sans_CJK_SC',monospace] text-[9px]">
      <TopBars />
      <div className="flex">
        <LeftBars />
        <DrawingWindow />
        <span className="w-[5px] shrink-0 border-l border-[#9a9a9a]" />
        <RightBars />
      </div>
      <footer className="pt-1">
        <div className="h-[10px] border-b-2 border-t-2 border-b-[#777] border-t-[#969696]" />
      </footer>
      <Watermark />
    </div>
  );
}
